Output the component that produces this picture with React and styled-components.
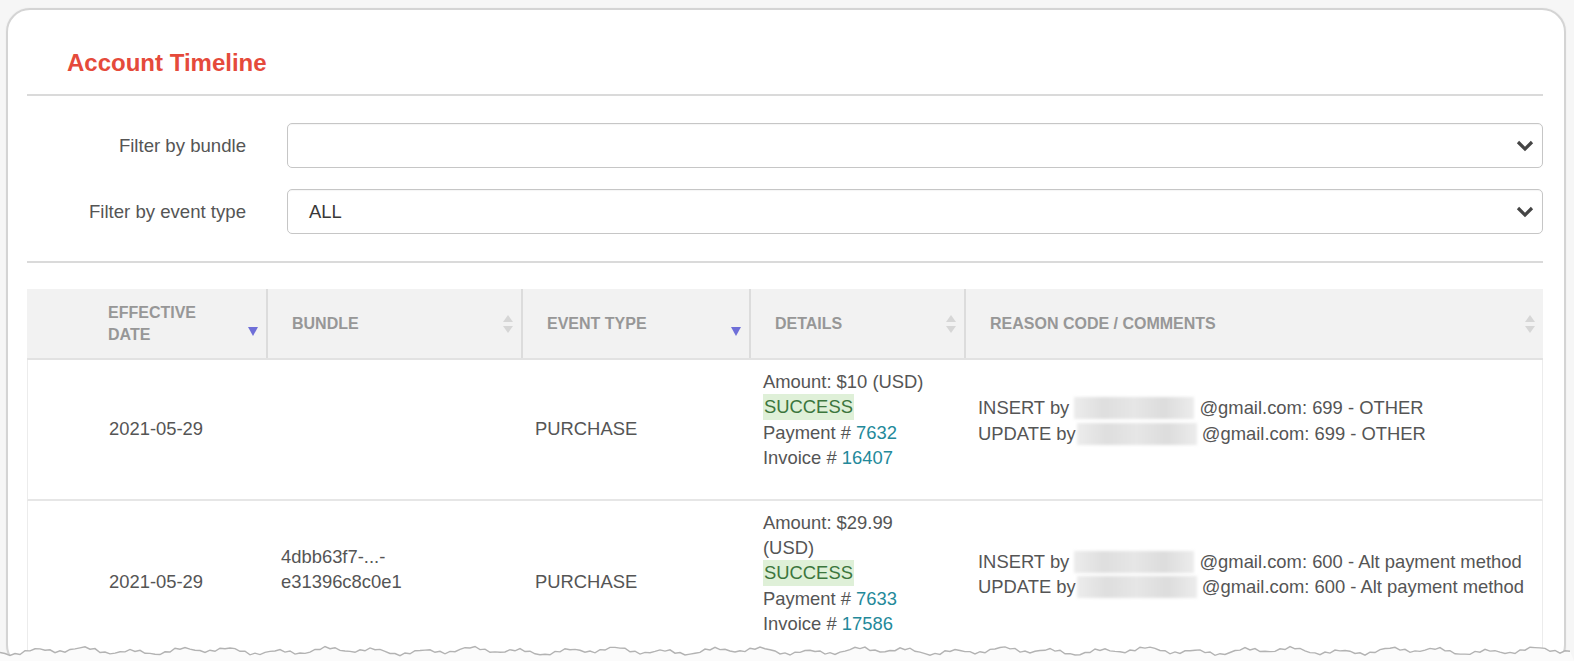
import React from "react";
import styled, { createGlobalStyle } from "styled-components";

const COLS = "239px 255px 228px 215px 1fr";

const GlobalStyle = createGlobalStyle`
  html, body {
    margin: 0;
    padding: 0;
    height: 661px;
    overflow: hidden;
    background: #f6f6f6;
  }
  body {
    font-family: "Liberation Sans", Arial, Helvetica, sans-serif;
    color: #555;
  }
`;

//Layout components
const Card = styled.div`
  margin: 8px 8px 0 6px;
  background: #fff;
  border: 2px solid #d4d4d4;
  border-radius: 24px;
  padding: 0 21px 0 19px;
  box-shadow: 0 0 2px rgba(0, 0, 0, 0.06);
`;

const TitleBar = styled.div`
  padding: 39px 0 17px 40px;
  border-bottom: 2px solid #dadada;
`;

const Title = styled.h2`
  margin: 0;
  font-size: 24px;
  line-height: 28px;
  font-weight: 700;
  color: #e54a3b;
`;

const Filters = styled.div`
  display: flex;
  flex-direction: column;
  gap: 21px;
  padding: 27px 0;
  border-bottom: 2px solid #dadada;
`;

const FilterRow = styled.div`
  display: grid;
  grid-template-columns: 234px 1fr;
  column-gap: 26px;
  align-items: center;
`;

const Label = styled.label`
  text-align: right;
  padding-right: 15px;
  font-size: 18.6px;
  color: #555;
`;

const Select = styled.div`
  height: 45px;
  box-sizing: border-box;
  border: 1px solid #c6c6c6;
  border-radius: 5px;
  display: flex;
  align-items: center;
  justify-content: space-between;
  padding: 0 8px 0 21px;
  font-size: 18.4px;
  color: #383838;
  box-shadow: inset 0 1px 1px rgba(0, 0, 0, 0.04);
`;

const Table = styled.div`
  margin-top: 26px;
`;

const HeadRow = styled.div`
  display: grid;
  grid-template-columns: ${COLS};
  background: #f2f2f2;
  border-bottom: 2px solid #e2e2e2;
`;

const HeadCell = styled.div`
  box-sizing: border-box;
  height: 69px;
  display: flex;
  align-items: center;
  justify-content: space-between;
  gap: 10px;
  padding: 0 8px 0 ${(p) => p.$left}px;
  border-left: ${(p) => (p.$first ? "none" : "2px solid #dcdcdc")};
  font-size: 16px;
  line-height: 22px;
  font-weight: 700;
  color: #979797;
  text-transform: uppercase;
`;

const HeadText = styled.span`
  max-width: ${(p) => p.$max || "none"};
`;

const SortIcon = styled.svg`
  flex: none;
  align-self: ${(p) => (p.$sorted ? "flex-end" : "center")};
  margin-bottom: ${(p) => (p.$sorted ? "22px" : "0")};
`;

const Row = styled.div`
  display: grid;
  grid-template-columns: ${COLS};
  border-bottom: 2px solid #e6e6e6;
  border-left: 1px solid #ececec;
  border-right: 1px solid #ececec;
`;

const Cell = styled.div`
  display: flex;
  flex-direction: column;
  justify-content: center;
  padding: ${(p) => p.$pad};
  font-size: 18.4px;
  line-height: 25.4px;
  color: #555;
`;

const Success = styled.span`
  background: #dff0d8;
  color: #3c763d;
  padding: 0 1px;
  align-self: flex-start;
`;

const Link = styled.a`
  color: #23899a;
  text-decoration: none;
`;

const Redacted = styled.span`
  display: inline-block;
  width: 120px;
  height: 22px;
  margin: 0 5px 0 ${(p) => p.$gap || 0}px;
  vertical-align: -5px;
  background: linear-gradient(90deg, #ececec, #dedede 25%, #e6e6e6 50%, #dcdcdc 75%, #ececec);
  filter: blur(1.6px);
`;

const TornEdge = styled.svg`
  position: fixed;
  left: 0;
  bottom: 0;
`;

const PAD = {
  date: "9px 13px 10px 81px",
  bundle: "9px 13px 36px 14px",
  event: "9px 13px 10px 13px",
  details: "9px 30px 28px 13px",
  reason: "9px 13px 26px 13px",
};

const rows = [
  {
    date: "2021-05-29",
    bundle: [],
    event: "PURCHASE",
    amount: "Amount: $10 (USD)",
    payment: "7632",
    invoice: "16407",
    reason: "699 - OTHER",
  },
  {
    date: "2021-05-29",
    bundle: ["4dbb63f7-...-", "e31396c8c0e1"],
    event: "PURCHASE",
    amount: "Amount: $29.99 (USD)",
    payment: "7633",
    invoice: "17586",
    reason: "600 - Alt payment method",
  },
];

const Chevron = () => (
  <svg width="18" height="12" viewBox="0 0 18 12">
    <polyline points="2,2 9,9 16,2" fill="none" stroke="#454545" strokeWidth="3.2" />
  </svg>
);

const SortBoth = () => (
  <SortIcon width="10" height="18" viewBox="0 0 10 18">
    <polygon points="5,0 10,7 0,7" fill="#d6d6d6" />
    <polygon points="0,11 10,11 5,18" fill="#d6d6d6" />
  </SortIcon>
);

const SortDown = () => (
  <SortIcon $sorted width="10" height="9" viewBox="0 0 10 9">
    <polygon points="0,0 10,0 5,9" fill="#6f6fd8" />
  </SortIcon>
);

const tornPoints = () => {
  const pts = [];
  for (let x = 0; x <= 1574; x += 5) {
    const y = 6 + 2.2 * Math.sin(x * 0.13) + 1.6 * Math.sin(x * 0.047 + 1.3) + 1.1 * Math.sin(x * 0.71);
    pts.push(`${x},${y.toFixed(1)}`);
  }
  return pts;
};

function App() {
  const pts = tornPoints();
  return (
    <>
      <GlobalStyle />
      <Card>
        <TitleBar>
          <Title>Account Timeline</Title>
        </TitleBar>
        <Filters>
          <FilterRow>
            <Label>Filter by bundle</Label>
            <Select>
              <span />
              <Chevron />
            </Select>
          </FilterRow>
          <FilterRow>
            <Label>Filter by event type</Label>
            <Select>
              <span>ALL</span>
              <Chevron />
            </Select>
          </FilterRow>
        </Filters>
        <Table>
          <HeadRow>
            <HeadCell $first $left={81}>
              <HeadText $max="110px">Effective Date</HeadText>
              <SortDown />
            </HeadCell>
            <HeadCell $left={24}>
              <HeadText>Bundle</HeadText>
              <SortBoth />
            </HeadCell>
            <HeadCell $left={24}>
              <HeadText>Event Type</HeadText>
              <SortDown />
            </HeadCell>
            <HeadCell $left={24}>
              <HeadText>Details</HeadText>
              <SortBoth />
            </HeadCell>
            <HeadCell $left={24}>
              <HeadText>Reason Code / Comments</HeadText>
              <SortBoth />
            </HeadCell>
          </HeadRow>
          {rows.map((r, i) => (
            <Row key={i}>
              <Cell $pad={PAD.date}>{r.date}</Cell>
              <Cell $pad={PAD.bundle}>
                {r.bundle.map((b) => (
                  <span key={b}>{b}</span>
                ))}
              </Cell>
              <Cell $pad={PAD.event}>{r.event}</Cell>
              <Cell $pad={PAD.details}>
                <span>{r.amount}</span>
                <Success>SUCCESS</Success>
                <span>
                  Payment # <Link href="#">{r.payment}</Link>
                </span>
                <span>
                  Invoice # <Link href="#">{r.invoice}</Link>
                </span>
              </Cell>
              <Cell $pad={PAD.reason}>
                <span>
                  INSERT by <Redacted />@gmail.com: {r.reason}
                </span>
                <span>
                  UPDATE by<Redacted $gap={1} />@gmail.com: {r.reason}
                </span>
              </Cell>
            </Row>
          ))}
        </Table>
      </Card>
      <TornEdge width="1574" height="16" viewBox="0 0 1574 16">
        <polygon points={`0,16 ${pts.join(" ")} 1574,16`} fill="#fbfbfb" />
        <polyline points={pts.join(" ")} fill="none" stroke="#b3b3b3" strokeWidth="1.4" />
      </TornEdge>
    </>
  );
}

export default App;
